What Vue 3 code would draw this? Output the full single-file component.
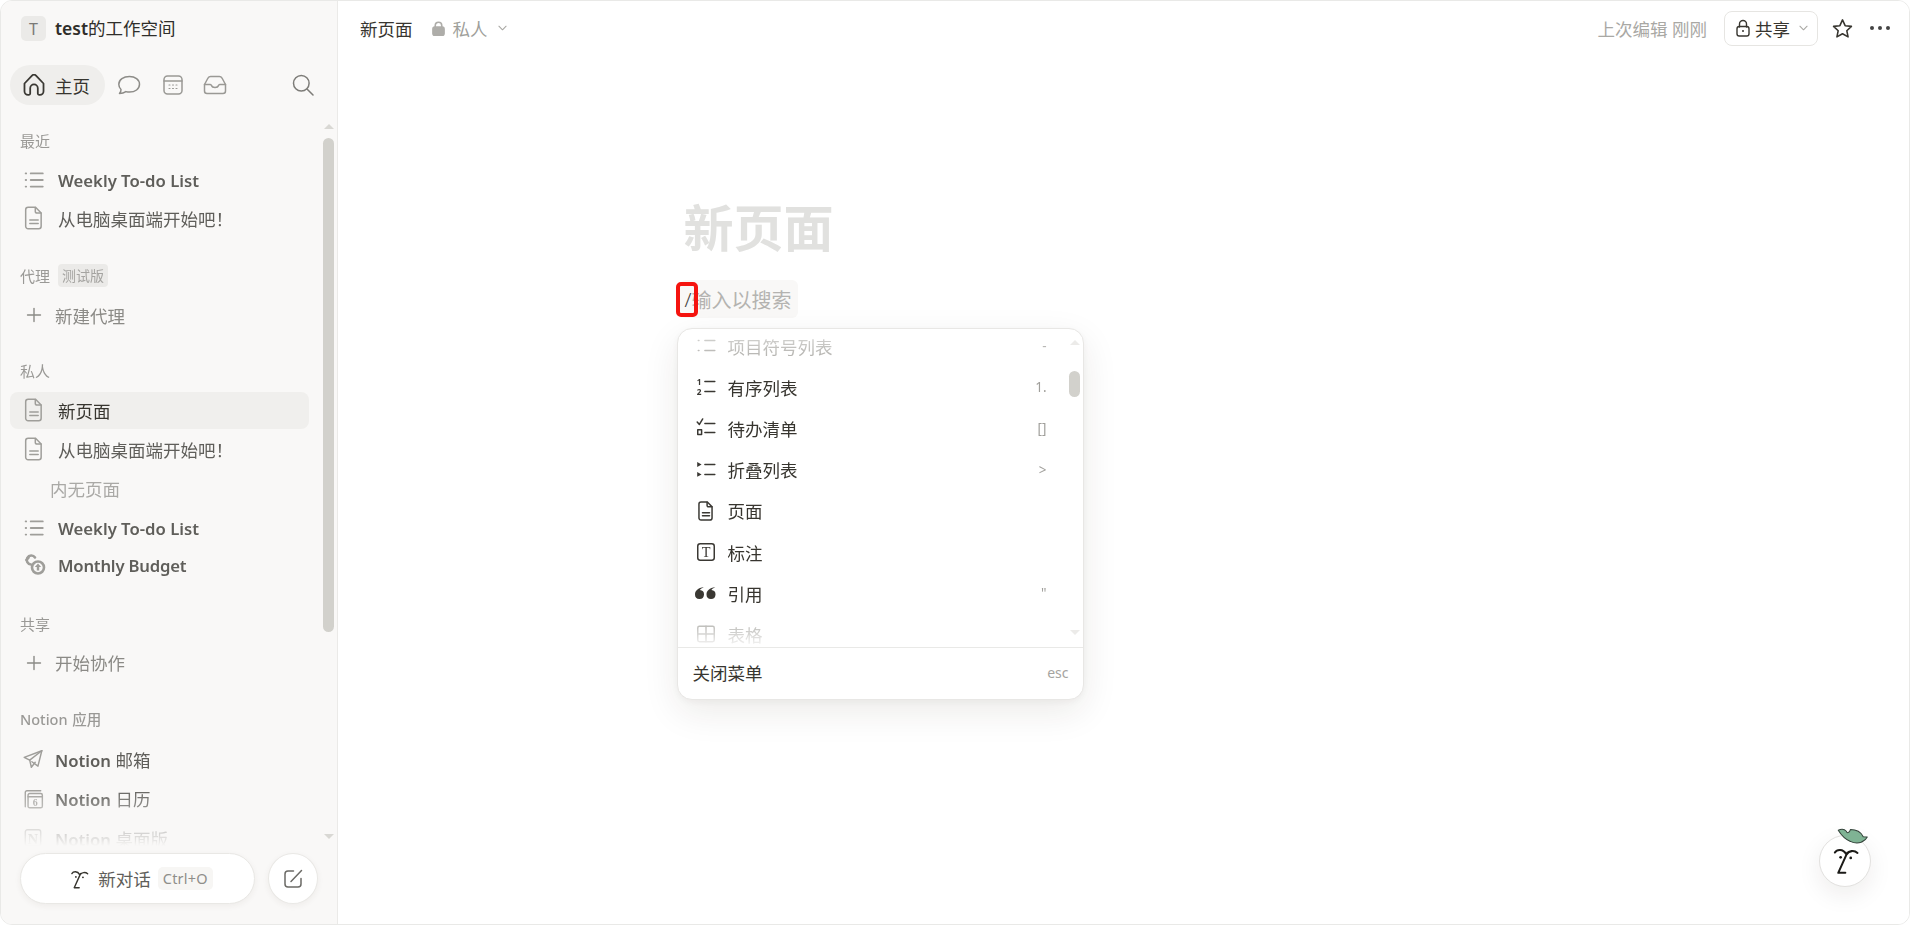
<script setup>
const P = {
  doc: ['M5.500 1.800h5.700l4.300 4.300v10.200a1.900 1.900 0 0 1-1.900 1.900H5.500a1.900 1.900 0 0 1-1.900-1.900V3.700a1.900 1.900 0 0 1 1.900-1.900z', 'M11 2v3a1.200 1.200 0 0 0 1.200 1.200h3.200', 'M6.800 11.500h6.400', 'M6.800 14.300h6.400'],
  list: ['M7 4h11', 'M7 10h11', 'M7 16h11', 'M2.400 4h.5', 'M2.400 10h.5', 'M2.400 16h.5'],
  bullet: ['M9 5h9', 'M9 14h9', 'M3 5h.6', 'M3 14h.6'],
  todo: ['M9 6h9', 'M9 14h9', 'M2 4.500l2 2.300 3-5', 'M2.500 11.500h3.500v4.500h-3.500z'],
  toggle: ['M9 5h9', 'M9 14h9'],
  numbered: ['M9 5h9', 'M9 14h9'],
  plus: ['M10 3.500v13', 'M3.500 10h13'],
  plane: ['M18 2.500L2 8.500l5 2.500 1.500 6.500 3.500-4.500', 'M18 2.500L7 11', 'M18 2.500l-3.500 14-5.500-4'],
  table: ['M2.500 4.500a1.500 1.500 0 0 1 1.500-1.500h12a1.500 1.500 0 0 1 1.500 1.500v11a1.500 1.500 0 0 1-1.500 1.500H4a1.500 1.500 0 0 1-1.500-1.500z', 'M2.500 10h15', 'M10 3v14'],
}
const recent = [
  { icon: 'list', text: 'Weekly To-do List', latin: true },
  { icon: 'doc', text: '从电脑桌面端开始吧！' },
]
const menu = [
  { icon: 'bullet', text: '项目符号列表', hint: '-', dim: true },
  { icon: 'numbered', text: '有序列表', hint: '1.' },
  { icon: 'todo', text: '待办清单', hint: '[]' },
  { icon: 'toggle', text: '折叠列表', hint: '>' },
  { icon: 'doc', text: '页面', hint: '' },
  { icon: 'callout', text: '标注', hint: '' },
  { icon: 'quote', text: '引用', hint: '"' },
  { icon: 'table', text: '表格', hint: '', dim: true },
]
</script>

<template>
  <div class="frame">
    <aside class="side">
      <div class="ws">
        <span class="ws-av">T</span>
        <span class="ws-name"><b>test</b>的工作空间</span>
      </div>
      <nav class="nav">
        <div class="pill">
          <svg class="nic dark" viewBox="2 2.500 18 18.500"><path d="M3 10.500L9.300 3.800a2.300 2.300 0 0 1 3.400 0L19 10.500v6.500a3 3 0 0 1-3 3h-.8a1 1 0 0 1-1-1v-4.500a3.200 3.200 0 0 0-6.400 0V19a1 1 0 0 1-1 1H6a3 3 0 0 1-3-3z"/></svg>
          <span>主页</span>
        </div>
        <svg class="nic chat" viewBox="0 0 24 22"><path d="M12.500 2.500c5.500 0 10 3 10 7.800s-4.500 7.800-10 7.800c-1.300 0-2.500-.2-3.600-.5-1.500 1-3.500 1.800-6.400 1.900 1-1.300 1.600-2.700 1.500-4-1.400-1.300-2.200-3.100-2.200-5.200 0-4.800 4.700-7.800 10.700-7.800z"/></svg>
        <svg class="nic cal" viewBox="0 0 20 20"><rect x="1" y="1" width="18" height="18" rx="3.500"/><path d="M1 6h18"/><path class="dots" d="M6 10h1M9.500 10h1M13 10h1M6 13.500h1M9.500 13.500h1M13 13.500h1"/></svg>
        <svg class="nic inbox" viewBox="0 0 24 20"><path d="M1.500 9.500L5 3a3 3 0 0 1 2.600-1.500h8.800A3 3 0 0 1 19 3l3.500 6.500V16a2.500 2.500 0 0 1-2.500 2.500H4A2.500 2.500 0 0 1 1.500 16z"/><path d="M1.500 9.500h5.800c.6 0 1 .4 1.200 1 .4 1.300 1.700 2 3.500 2s3.100-.7 3.500-2c.2-.6.6-1 1.200-1h5.800"/></svg>
        <svg class="nic search" viewBox="0 0 22 22"><circle cx="9.300" cy="9.300" r="7.800"/><path d="M15 15l6 6"/></svg>
      </nav>

      <div class="scroll-wrap">
        <div class="scroll">
          <section class="sec first">
            <div class="label">最近</div>
            <div v-for="r in recent" :key="r.text" class="row">
              <span class="ri"><svg class="ic" :class="r.icon" viewBox="0 0 20 20"><path v-for="d in P[r.icon]" :key="d" :d="d"/></svg></span>
              <span :class="{ lat: r.latin }">{{ r.text }}</span>
            </div>
          </section>
          <section class="sec">
            <div class="label">代理 <span class="beta">测试版</span></div>
            <div class="row add">
              <svg class="plus" viewBox="0 0 20 20"><path v-for="d in P.plus" :key="d" :d="d"/></svg>
              <span>新建代理</span>
            </div>
          </section>
          <section class="sec">
            <div class="label">私人</div>
            <div class="row active">
              <span class="ri"><svg class="ic doc" viewBox="0 0 20 20"><path v-for="d in P.doc" :key="d" :d="d"/></svg></span>
              <span>新页面</span>
            </div>
            <div class="row">
              <span class="ri"><svg class="ic doc" viewBox="0 0 20 20"><path v-for="d in P.doc" :key="d" :d="d"/></svg></span>
              <span>从电脑桌面端开始吧！</span>
            </div>
            <div class="row empty">内无页面</div>
            <div class="row">
              <span class="ri"><svg class="ic list" viewBox="0 0 20 20"><path v-for="d in P.list" :key="d" :d="d"/></svg></span>
              <span class="lat">Weekly To-do List</span>
            </div>
            <div class="row tight">
              <span class="ri">
                <svg class="ic coins" viewBox="0 0 24 22">
                  <path d="M9 10.500a4.500 4.500 0 1 1 4-7"/>
                  <path class="fat" d="M6.500 3.500l-2 2.500"/>
                  <circle cx="16" cy="13.500" r="6"/>
                  <path class="fill" d="M16 9.500l3.200 3.500h-2v3.500h-2.400V13h-2z"/>
                </svg>
              </span>
              <span class="lat mb">Monthly Budget</span>
            </div>
          </section>
          <section class="sec share-sec">
            <div class="label">共享</div>
            <div class="row add">
              <svg class="plus" viewBox="0 0 20 20"><path v-for="d in P.plus" :key="d" :d="d"/></svg>
              <span>开始协作</span>
            </div>
          </section>
          <section class="sec">
            <div class="label lat-label">Notion 应用</div>
            <div class="row app">
              <span class="ri ai"><svg class="ic" viewBox="0 0 20 20"><path v-for="d in P.plane" :key="d" :d="d"/></svg></span>
              <span><span class="lat">Notion</span> 邮箱</span>
            </div>
            <div class="row app">
              <span class="ri ai">
                <svg class="ic" viewBox="0 0 20 20">
                  <path d="M3 17V4a1.500 1.500 0 0 1 1.500-1.500H17"/>
                  <rect x="5.500" y="5" width="13" height="13" rx="1.500"/>
                  <path d="M5.500 8h13"/>
                  <text x="12" y="16" class="svgt">6</text>
                </svg>
              </span>
              <span><span class="lat">Notion</span> 日历</span>
            </div>
            <div class="row app">
              <span class="ri ai">
                <svg class="ic" viewBox="0 0 20 20">
                  <rect x="3" y="2.500" width="14" height="15" rx="2"/>
                  <text x="10" y="15" class="svgt big">N</text>
                </svg>
              </span>
              <span><span class="lat">Notion</span> 桌面版</span>
            </div>
          </section>
        </div>
        <div class="sb">
          <i class="arr up"></i>
          <i class="thumb"></i>
          <i class="arr down"></i>
        </div>
      </div>

      <div class="foot">
        <button class="newchat">
          <svg class="face-s" viewBox="130 105 85 90"><path d="M138 127c6-10 24-12 33 4M174 131c5-9 21-12 31-3M175 127L148 187h21"/><circle cx="155" cy="141" r="4" class="dot"/><circle cx="185" cy="143" r="4" class="dot"/></svg>
          <span>新对话</span>
          <kbd>Ctrl+O</kbd>
        </button>
        <button class="round">
          <svg viewBox="0 0 22 22"><path d="M11.500 3H6a3 3 0 0 0-3 3v10a3 3 0 0 0 3 3h10a3 3 0 0 0 3-3v-5.500"/><path d="M9 13.500L19.500 2.500"/></svg>
        </button>
      </div>
    </aside>

    <main class="main">
      <header class="top">
        <span class="crumb">新页面</span>
        <svg class="lock-f" viewBox="0 0 14 16"><path d="M3.500 7V4.700a3.500 3.500 0 0 1 7 0V7" /><rect x="1" y="6.500" width="12" height="9" rx="2"/></svg>
        <span class="priv">私人</span>
        <svg class="chev" viewBox="0 0 10 6"><path d="M1 1l4 4 4-4"/></svg>
        <span class="edited">上次编辑 刚刚</span>
        <button class="share">
          <svg class="lock-o" viewBox="0 0 16 18"><path d="M4.500 8V5a3.500 3.500 0 0 1 7 0v3"/><rect x="2" y="7.500" width="12" height="9.500" rx="2.200"/><circle cx="8" cy="12" r="1" class="dot"/></svg>
          <span>共享</span>
          <svg class="chev" viewBox="0 0 10 6"><path d="M1 1l4 4 4-4"/></svg>
        </button>
        <svg class="star" viewBox="0 0 20 20"><path d="M10 1.800l2.500 5.500 6 .7-4.400 4.100 1.200 5.900L10 15l-5.300 3 1.200-5.900L1.500 8l6-.7z"/></svg>
        <div class="more"><i></i><i></i><i></i></div>
      </header>

      <div class="page">
        <h1 class="title">新页面</h1>
        <div class="cmd">
          <div class="cmd-box"><span class="slash">/</span><span class="ph">输入以搜索</span></div>
          <span class="red"></span>
          <div class="menu">
            <div class="m-scroll">
              <div class="m-list">
                <div v-for="m in menu" :key="m.text" class="m-row" :class="{ dim: m.dim }">
                  <span class="m-ic">
                    <svg v-if="m.icon === 'numbered'" viewBox="0 0 20 20">
                      <path v-for="d in P.numbered" :key="d" :d="d"/>
                      <text x="3.800" y="8" class="svgt tiny">1</text>
                      <text x="3.800" y="17" class="svgt tiny">2</text>
                    </svg>
                    <svg v-else-if="m.icon === 'toggle'" viewBox="0 0 20 20">
                      <path v-for="d in P.toggle" :key="d" :d="d"/>
                      <path class="fill" d="M2 2.800l4 2.200-4 2.200zM2 11.800l4 2.200-4 2.200z"/>
                    </svg>
                    <svg v-else-if="m.icon === 'callout'" viewBox="0 0 20 20">
                      <rect x="2.500" y="2.500" width="15" height="15" rx="2.200"/>
                      <text x="10" y="14.500" class="svgt big thin">T</text>
                    </svg>
                    <svg v-else-if="m.icon === 'quote'" class="quote" viewBox="0 0 21 12">
                      <path class="fill" d="M0 7.500C0 3.800 3 .9 8.800.3 6.800 1.200 5.500 2 4.900 3a4.500 4.500 0 1 1-4.900 4.500zM11.500 7.500c0-3.700 3-6.600 8.800-7.200-2 .9-3.300 1.700-3.900 2.700a4.500 4.500 0 1 1-4.900 4.500z"/>
                    </svg>
                    <svg v-else viewBox="0 0 20 20"><path v-for="d in P[m.icon]" :key="d" :d="d"/></svg>
                  </span>
                  <span class="m-txt">{{ m.text }}</span>
                  <span class="m-hint">{{ m.hint }}</span>
                </div>
              </div>
              <i class="m-arr up"></i>
              <i class="m-thumb"></i>
              <i class="m-arr down"></i>
            </div>
            <div class="m-foot"><span>关闭菜单</span><span class="esc">esc</span></div>
          </div>
        </div>
      </div>

      <div class="fab">
        <svg viewBox="91 75 154 154">
          <path class="leaf" d="M148 61c8-4 18-4 24 3 2 6 9 6 12-5 18 0 32 9 38 21l12 1-6 8c-14 12-30 12-44 5-18-7-28-20-36-33z"/>
          <path class="stroke" d="M138 127c6-10 24-12 33 4M174 131c5-9 21-12 31-3M175 127L148 187h21"/>
          <circle cx="155" cy="141" r="4"/>
          <circle cx="185" cy="143" r="4"/>
        </svg>
      </div>
    </main>
  </div>
</template>

<style>
html, body { margin: 0; background: #fff; }
</style>

<style scoped>
* { box-sizing: border-box; }
.frame {
  width: 1910px; height: 925px; display: flex; overflow: hidden; position: relative;
  border: 1px solid #e9e9e7; border-radius: 12px; background: #fff;
  font-family: "Noto Sans", "Noto Sans CJK SC", sans-serif; font-size: 17.5px; color: #37352f;
}
i { display: block; font-style: normal; }
svg { display: block; fill: none; stroke: currentColor; stroke-linecap: round; stroke-linejoin: round; }
.svgt { font-family: "Liberation Serif", serif; text-anchor: middle; font-size: 9px; font-weight: 700; fill: currentColor; stroke: none; }
.svgt.big { font-size: 13px; }
.svgt.thin { font-weight: 400; }
.svgt.tiny { font-family: "Noto Sans", sans-serif; font-size: 7.500px; }
.fill { fill: currentColor; stroke: none; }
.dot { fill: currentColor; stroke: none; }

.side { width: 337px; flex: none; display: flex; flex-direction: column; background: #f9f8f7; border-right: 1px solid #ebeae8; }
.ws { display: flex; align-items: center; height: 25px; margin-top: 15px; padding-left: 20px; }
.ws-av { width: 25px; height: 25px; border-radius: 5px; background: #ebeae8; color: #7a7976; font-size: 16px; display: flex; align-items: center; justify-content: center; }
.ws-name { margin-left: 9px; color: #2f2e2a; line-height: 25px; }
.ws-name b { font-weight: 600; }

.nav { display: flex; align-items: center; height: 40px; margin-top: 24px; padding-left: 9px; padding-right: 23px; }
.pill { width: 95px; height: 40px; border-radius: 20px; background: #efeeec; display: flex; align-items: center; padding-left: 13px; gap: 10px; color: #37352f; }
.nic { color: #8d8c88; stroke-width: 1.500; }
.nic.dark { width: 22px; height: 22px; color: #3a3833; stroke-width: 1.500; }
.nic.chat { width: 24px; height: 22px; margin-left: 12px; }
.nic.cal { width: 20px; height: 20px; margin-left: 22px; color: #9a9995; }
.nic.cal .dots { stroke-width: 1.100; }
.nic.inbox { width: 24px; height: 20px; margin-left: 20px; color: #9a9995; }
.nic.search { width: 22px; height: 22px; margin-left: auto; color: #7d7c78; }

.scroll-wrap { flex: 1; position: relative; min-height: 0; margin-top: 10px; }
.scroll {
  height: 100%; overflow: hidden; padding: 10px 28px 0 9px;
  -webkit-mask-image: linear-gradient(to bottom, #000 calc(100% - 58px), rgba(0,0,0,.12) calc(100% - 6px), transparent 100%);
  mask-image: linear-gradient(to bottom, #000 calc(100% - 58px), rgba(0,0,0,.12) calc(100% - 6px), transparent 100%);
}
.sec + .sec { margin-top: 22px; }
.sec.share-sec { margin-top: 24.500px; }
.label { height: 30px; padding-left: 10px; font-size: 15px; color: #9a9996; display: flex; align-items: center; gap: 8px; margin-bottom: 6px; }
.first .label { margin-bottom: 6.500px; }
.first .row + .row { margin-top: -1px; }
.first + .sec { margin-top: 24px; }
.lat-label { font-weight: 500; gap: 0; word-spacing: 1px; font-size: 14.500px; margin-bottom: 7.500px; }
.beta { background: #ebeae8; color: #a5a4a1; font-size: 14px; border-radius: 4px; padding: 0 4px; height: 23px; line-height: 23px; }
.row { height: 37px; margin-bottom: 2px; display: flex; align-items: center; border-radius: 8px; color: #5f5e5a; padding-left: 12px; white-space: nowrap; }
.row:last-child { margin-bottom: 0; }
.row.app { margin-bottom: 2.500px; }
.row.active { background: #f0efed; color: #37352f; }
.row.empty { padding-left: 40px; color: #aaa9a6; margin-top: 2px; margin-bottom: 3px; }
.row.tight { margin-top: -2px; }
.row.add { padding-left: 14px; color: #8b8a86; }
.row.app { padding-left: 11px; }
.lat { font-weight: 600; font-size: 16.700px; }
.lat.mb { letter-spacing: -.2px; }
.ri { width: 24px; height: 24px; margin-right: 12px; display: flex; align-items: center; justify-content: center; flex: none; color: #9f9e9a; }
.ai { margin-right: 10px; }
.ic { width: 22px; height: 22px; stroke-width: 1.300; flex: none; }
.ic.doc { width: 26px; height: 26px; stroke-width: 1.150; }
.ic.list { stroke-width: 1.600; }
.coins { width: 24px; height: 22px; stroke-width: 2.600; }
.plus { width: 20px; height: 20px; stroke-width: 1.400; margin-right: 11px; color: #8b8a86; flex: none; }

.sb { position: absolute; top: 0; bottom: 0; right: 3px; width: 11px; }
.thumb { position: absolute; top: 23px; left: 0; width: 11px; height: 494px; border-radius: 6px; background: #d2d1cc; }
.arr { position: absolute; left: 1px; width: 0; height: 0; border-left: 5px solid transparent; border-right: 5px solid transparent; }
.arr.up { top: 9px; border-bottom: 5px solid #d9d8d4; }
.arr.down { bottom: 7px; border-top: 5px solid #d9d8d4; }

.foot { height: 78px; flex: none; display: flex; gap: 13px; padding: 7px 0 0 19px; align-items: flex-start; }
.newchat, .round { background: #fff; border: 1px solid #e9e8e5; box-shadow: 0 2px 6px rgba(60,50,30,.06); display: flex; align-items: center; justify-content: center; font: inherit; padding: 0; }
.newchat { width: 235px; height: 51px; border-radius: 26px; color: #5f5e5a; padding-left: 8px; }
.newchat kbd { margin-left: 7px; font: inherit; font-size: 14.500px; height: 23px; line-height: 23px; padding: 0 5px; background: #f7f6f4; border-radius: 5px; color: #8f8e8a; letter-spacing: .2px; }
.face-s { width: 20px; height: 22px; margin-right: 8px; color: #37352f; stroke-width: 6; }
.round { width: 50px; height: 51px; border-radius: 50%; color: #6b6a66; }
.round svg { width: 22px; height: 22px; stroke-width: 1.500; }

.main { flex: 1; min-width: 0; position: relative; background: #fff; }
.top { height: 54px; display: flex; align-items: center; padding: 0 19px 0 22px; }
.crumb { color: #37352f; }
.lock-f { width: 13px; height: 15px; margin-left: 19px; color: #aeada9; stroke-width: 1.700; }
.lock-f rect { fill: currentColor; }
.priv { margin-left: 8px; color: #a09f9b; }
.chev { width: 9px; height: 6px; margin-left: 10px; color: #a9a8a4; stroke-width: 1.200; }
.edited { margin-left: auto; color: #a9a8a4; }
.share { margin-left: 17px; width: 94px; height: 35px; border: 1px solid #e6e5e2; border-radius: 8px; background: #fff; display: flex; align-items: center; padding: 0 0 0 10px; font: inherit; color: #37352f; }
.lock-o { width: 16px; height: 18px; margin-right: 4px; stroke-width: 1.400; }
.share .chev { margin-left: 9px; }
.star { width: 21px; height: 21px; margin-left: 14px; color: #37352f; stroke-width: 1.500; }
.more { display: flex; gap: 4px; margin-left: 17px; }
.more i { width: 4px; height: 4px; border-radius: 50%; background: #444; }

.page { width: 880px; margin: 0 auto; padding-top: 143px; }
.title { margin: 0; font-size: 50px; line-height: 60px; font-weight: 700; color: #e1e1df; padding-left: 0; }
.cmd { position: relative; margin-top: 22px; }
.cmd-box { display: inline-flex; align-items: center; height: 38px; margin-left: -4px; padding: 0 6px 0 5px; border-radius: 6px; background: #f9f8f7; font-size: 20px; }
.slash { color: #45433e; width: 7px; font-weight: 300; }
.ph { color: #b4b3b0; font-size: 20px; }
.red { position: absolute; left: -8px; top: 2px; width: 22px; height: 35px; border: 4px solid #f5140f; border-radius: 5px; }

.menu { position: absolute; left: -7px; top: 48px; width: 407px; height: 372px; background: #fff; border: 1px solid #e8e7e5; border-radius: 15px; box-shadow: 0 12px 36px rgba(40,30,10,.09), 0 2px 6px rgba(40,30,10,.04); display: flex; flex-direction: column; overflow: hidden; z-index: 2; }
.m-scroll { height: 319px; position: relative; overflow: hidden; flex: none; border-bottom: 1px solid #e9e9e7; }
.m-list { margin-top: -3.500px; height: 322.500px; overflow: hidden; -webkit-mask-image: linear-gradient(to bottom, rgba(0,0,0,.35) 0, #000 34px, #000 calc(100% - 28px), rgba(0,0,0,.05) 100%); mask-image: linear-gradient(to bottom, rgba(0,0,0,.35) 0, #000 34px, #000 calc(100% - 28px), rgba(0,0,0,.05) 100%); }
.m-row { height: 41.200px; display: flex; align-items: center; padding-left: 17px; padding-right: 36px; color: #37352f; }
.m-row.dim { color: #b0afab; }
.m-ic { width: 22px; height: 22px; display: flex; align-items: center; justify-content: center; margin-right: 11px; color: #3a3833; }
.dim .m-ic { color: #b0afab; }
.m-ic svg { width: 22px; height: 22px; stroke-width: 1.350; flex: none; }
.m-ic svg.quote { width: 21px; height: 12px; }
.m-txt { flex: 1; }
.m-hint { font-size: 13.500px; color: #a09f9b; }
.m-thumb { position: absolute; right: 3px; top: 42px; width: 11px; height: 26px; border-radius: 6px; background: #d2d1cc; }
.m-arr { position: absolute; right: 3px; width: 0; height: 0; border-left: 5.500px solid transparent; border-right: 5.500px solid transparent; }
.m-arr.up { top: 11px; border-bottom: 5px solid #ecebe9; }
.m-arr.down { bottom: 12px; border-top: 5px solid #ecebe9; }
.m-foot { flex: 1; display: flex; align-items: center; justify-content: space-between; padding: 0 14px 2px 15px; color: #37352f; }
.esc { font-size: 14px; color: #a5a4a1; }

.fab { position: absolute; left: 1481px; top: 834px; width: 52px; height: 52px; border-radius: 50%; background: #fff; border: 1px solid #e2e1df; box-shadow: 0 8px 24px rgba(40,30,10,.08); }
.fab svg { width: 52px; height: 52px; margin: -1px; overflow: visible; color: #1c1b18; }
.fab .stroke { stroke-width: 6; }
.fab circle { fill: #1c1b18; stroke: none; }
.fab .leaf { fill: #7fb394; stroke: #34423a; stroke-width: 3; }
</style>
